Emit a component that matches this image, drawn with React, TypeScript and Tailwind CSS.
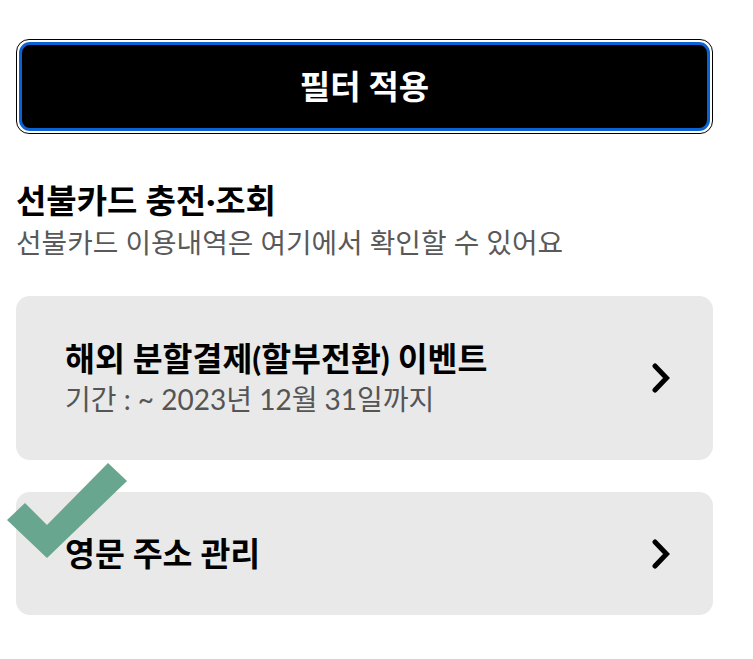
import React from "react";

const font = { fontFamily: '"Lato", "Noto Sans CJK KR", sans-serif' };

function Chevron() {
  return (
    <svg width="20" height="30" viewBox="0 0 20 30" className="shrink-0">
      <path d="M4 3 L15.5 15 L4 27" fill="none" stroke="#000" strokeWidth="5" strokeLinecap="round" strokeLinejoin="miter" />
    </svg>
  );
}

export default function App() {
  return (
    <div className="min-h-[659px] bg-white" style={font}>
      <div className="relative w-[697px] ml-4 pt-[39px]">
        <div className="rounded-[13px] border border-black p-[2px]">
          <button className="w-full h-[89px] rounded-[11px] border-[3px] border-[#0a62d4] bg-black text-white text-[33px] font-bold">
            필터 적용
          </button>
        </div>

        <div className="mt-[45px]">
          <h2 className="text-[33px] font-bold leading-[42px] text-black">선불카드 충전·조회</h2>
          <p className="mt-[3px] text-[27.8px] leading-[38px] text-[#595959]">선불카드 이용내역은 여기에서 확인할 수 있어요</p>
        </div>

        <div className="mt-[34px] flex flex-col gap-8">
          <div className="h-[164px] rounded-[14px] bg-[#e9e9e9] flex items-center pl-[49px] pr-[42px]">
            <div className="flex-1">
              <div className="text-[32.5px] font-bold leading-[42px] text-black">해외 분할결제(할부전환) 이벤트</div>
              <div className="text-[28px] leading-[38px] text-[#555]">기간 : ~ 2023년 12월 31일까지</div>
            </div>
            <Chevron />
          </div>
          <div className="h-[123px] rounded-[14px] bg-[#e9e9e9] flex items-center pl-[49px] pr-[42px]">
            <div className="flex-1 text-[32.5px] font-bold leading-[42px] text-black">영문 주소 관리</div>
            <Chevron />
          </div>
        </div>

        <svg className="absolute left-[-16px] top-[424px]" width="140" height="140" viewBox="0 0 140 140">
          <polygon points="7,96 25,79 47,101 108,39 127,57 47,134" fill="#68a690" />
        </svg>
      </div>
    </div>
  );
}
